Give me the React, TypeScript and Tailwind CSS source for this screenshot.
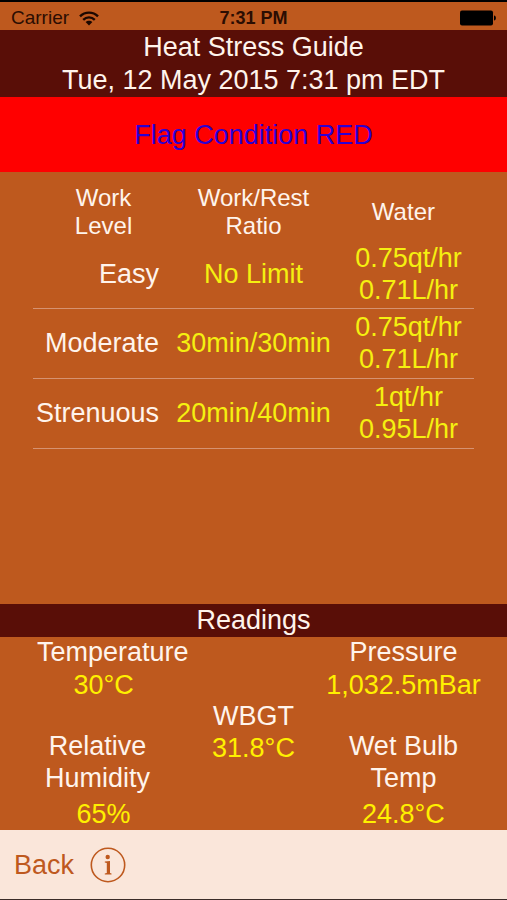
const rows = [
  { level: 'Easy', ratio: 'No Limit', water: ['0.75qt/hr', '0.71L/hr'], size: 'h-[68px]' },
  { level: 'Moderate', ratio: '30min/30min', water: ['0.75qt/hr', '0.71L/hr'], size: 'h-[70px]' },
  { level: 'Strenuous', ratio: '20min/40min', water: ['1qt/hr', '0.95L/hr'], size: 'h-[70px]' },
];

function StatusBar() {
  return (
    <div className="grid h-[30px] grid-cols-3 items-center border-t-2 border-black px-[11px] pt-1 text-[19px] leading-6 text-[#2b0d02]">
      <div className="flex items-center gap-[10px]">
        <span>Carrier</span>
        <svg width="20" height="15" viewBox="0 0 20 15" fill="none" stroke="#1c0800" strokeWidth="2.4" aria-label="Wi-Fi">
          <path d="M1 5.4C6 .4 14 .4 19 5.4" />
          <path d="M4.2 8.8C7.5 5.6 12.5 5.6 15.8 8.8" />
          <path d="M10 14.4L6.6 11C8.5 9.2 11.5 9.2 13.4 11Z" fill="#1c0800" stroke="none" />
        </svg>
      </div>
      <span className="text-center text-[18px] font-bold">7:31 PM</span>
      <svg className="justify-self-end" width="36" height="16" viewBox="0 0 36 16" fill="#000" aria-label="Battery full">
        <rect x="0" y="0.5" width="33" height="15" rx="2" />
        <path d="M34 5.5C36.5 5.5 36.5 10.5 34 10.5Z" />
      </svg>
    </div>
  );
}

function WorkTable() {
  return (
    <table className="w-full table-fixed border-collapse">
      <colgroup>
        <col className="w-[32%]" />
        <col className="w-[36%]" />
        <col className="w-[32%]" />
      </colgroup>
      <thead>
        <tr className="h-14 text-2xl leading-7">
          <th scope="col" className="p-0 font-normal">Work<br />Level</th>
          <th scope="col" className="p-0 font-normal">Work/Rest<br />Ratio</th>
          <th scope="col" className="p-0 font-normal">Water</th>
        </tr>
      </thead>
      <tbody className="text-[27px] leading-8">
        {rows.map((row) => (
          <tr key={row.level} className={`${row.size} border-b border-[#d69271]`}>
            <th scope="row" className="p-0 pr-[15px] text-right font-normal">{row.level}</th>
            <td className="p-0 text-center text-[#f5f010]">{row.ratio}</td>
            <td className="p-0 pl-[10px] text-center text-[#f5f010]">
              {row.water[0]}
              <br />
              {row.water[1]}
            </td>
          </tr>
        ))}
      </tbody>
    </table>
  );
}

export default function App() {
  return (
    <div className="flex min-h-screen flex-col bg-[#be591e] font-['Liberation_Sans',Arial,sans-serif] text-[#fff4ec]">
      <StatusBar />
      <header className="bg-[#590e07] pt-px text-center text-[27px] leading-[33px]">
        <h1>Heat Stress Guide</h1>
        <p>Tue, 12 May 2015 7:31 pm EDT</p>
      </header>
      <div className="flex h-[75px] items-center justify-center bg-[#ff0000] pt-px text-[27px] text-[#2c00d4]">
        Flag Condition RED
      </div>
      <main className="flex flex-1 flex-col">
        <div className="flex-1 px-[33px] pt-3">
          <WorkTable />
        </div>
        <h2 className="bg-[#590e07] text-center text-[27px] leading-[33px]">Readings</h2>
        <dl className="grid h-[193px] grid-cols-[32%_36%_32%] px-[33px] text-center text-[27px] leading-8 [&_dd]:text-[#fff000]">
          <div className="flex flex-col justify-between">
            <div>
              <dt className="pl-1 leading-[30px]">Temperature</dt>
              <dd className="leading-9">30°C</dd>
            </div>
            <div>
              <dt className="pr-3">Relative<br />Humidity</dt>
              <dd className="mt-1">65%</dd>
            </div>
          </div>
          <div className="pt-[63px]">
            <dt>WBGT</dt>
            <dd>31.8°C</dd>
          </div>
          <div className="flex flex-col justify-between">
            <div>
              <dt className="leading-[30px]">Pressure</dt>
              <dd className="flex justify-center whitespace-nowrap leading-9">1,032.5mBar</dd>
            </div>
            <div>
              <dt>Wet Bulb<br />Temp</dt>
              <dd className="mt-1">24.8°C</dd>
            </div>
          </div>
        </dl>
      </main>
      <footer className="flex h-[70px] items-center gap-4 border-b border-[#3a2c28] bg-[#fae6da] px-[14px] text-[#be591e]">
        <button type="button" className="text-[27px] leading-8">Back</button>
        <button type="button" aria-label="Information">
          <svg width="36" height="36" viewBox="0 0 36 36" fill="#be591e">
            <circle cx="18" cy="18" r="16.7" fill="none" stroke="#be591e" strokeWidth="1.6" />
            <circle cx="17.7" cy="10" r="2.2" />
            <path d="M14.8 14.5L20 14V26L21.5 26.6V27.4H14.8V26.6L16.8 26V16L14.8 15.5Z" />
          </svg>
        </button>
      </footer>
    </div>
  );
}
